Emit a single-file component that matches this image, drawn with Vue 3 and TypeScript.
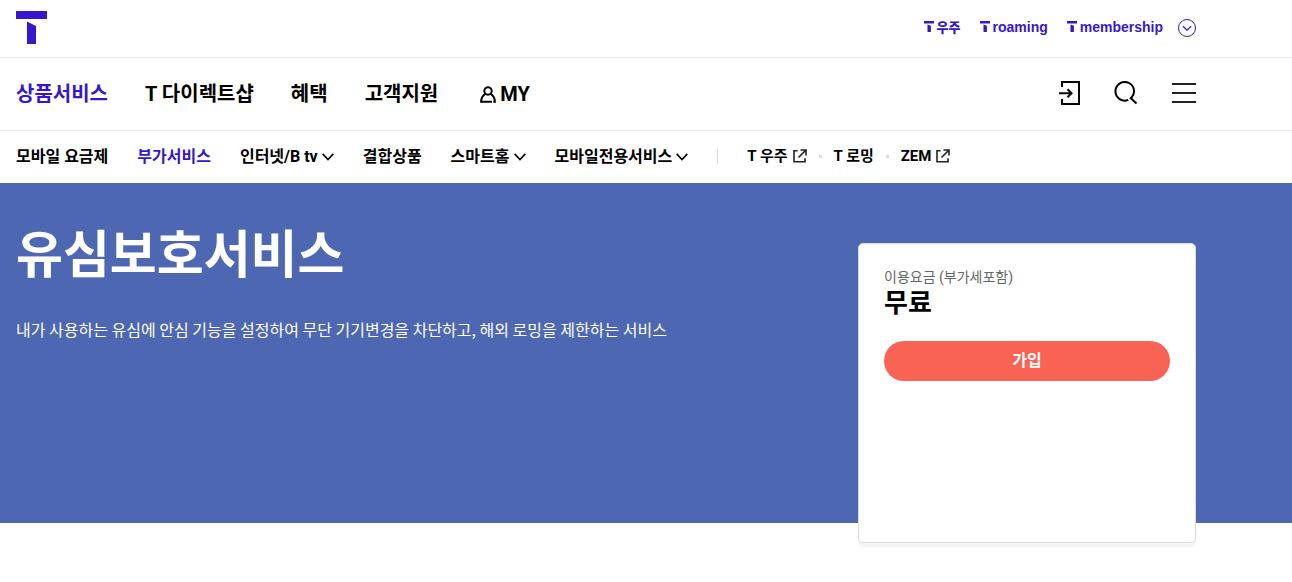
<script setup lang="ts">
interface MenuItem {
  label: string
  active?: boolean
  icon?: 'user' | 'down' | 'external'
}

const brands = [
  { label: '우주', korean: true },
  { label: 'roaming', korean: false },
  { label: 'membership', korean: false },
]

const mainMenu: MenuItem[] = [
  { label: '상품서비스', active: true },
  { label: 'T 다이렉트샵' },
  { label: '혜택' },
  { label: '고객지원' },
  { label: 'MY', icon: 'user' },
]

const subMenu: MenuItem[] = [
  { label: '모바일 요금제' },
  { label: '부가서비스', active: true },
  { label: '인터넷/B tv', icon: 'down' },
  { label: '결합상품' },
  { label: '스마트홈', icon: 'down' },
  { label: '모바일전용서비스', icon: 'down' },
]

const siteLinks: MenuItem[] = [
  { label: 'T 우주', icon: 'external' },
  { label: 'T 로밍' },
  { label: 'ZEM', icon: 'external' },
]
</script>

<template>
  <div class="page">
    <header>
      <div class="bar">
        <div class="inner top">
          <a class="logo" href="#" aria-label="T world">
            <svg width="31" height="33" viewBox="0 0 31 33" fill="currentColor">
              <path d="M0 0h31v8H0zM11 10.5l9 4.5v18h-9z" />
            </svg>
          </a>
          <div class="brands">
            <a v-for="b in brands" :key="b.label" href="#" class="brand" :class="{ korean: b.korean }">
              <svg width="10" height="11" viewBox="0 0 10 11" fill="currentColor">
                <path d="M0 0h10v2.500H0zM3.500 3.400l3.400 1.400V11H3.500z" />
              </svg>
              <span>{{ b.label }}</span>
            </a>
            <button type="button" class="more" aria-label="더보기">
              <svg width="18" height="18" viewBox="0 0 18 18" fill="none" stroke="currentColor">
                <circle cx="9" cy="9" r="8.5" />
                <path d="M5 7.200l4 4 4-4" stroke-width="1.300" />
              </svg>
            </button>
          </div>
        </div>
      </div>

      <div class="bar">
        <div class="inner main">
          <nav class="main-menu" aria-label="주 메뉴">
            <a v-for="m in mainMenu" :key="m.label" href="#" :class="{ active: m.active, user: m.icon }">
              <svg v-if="m.icon" width="16" height="17" viewBox="0 0 16 17" fill="none" stroke="currentColor" stroke-width="2">
                <circle cx="8" cy="5" r="3.700" />
                <path d="M5.500 7.800C2.800 9.200 1.200 11.800 1.100 15.700h10.800M13.300 15.700h1.600c-.1-3.900-1.700-6.500-4.400-7.900" />
              </svg>
              <span>{{ m.label }}</span>
            </a>
          </nav>
          <div class="tools">
            <button type="button" aria-label="로그인">
              <svg width="22" height="24" viewBox="0 0 22 24" fill="none" stroke="currentColor" stroke-width="2">
                <path d="M4 6V1h17v22H4v-5M1 12.300h12M9.500 8.300l4 4-4 4" />
              </svg>
            </button>
            <button type="button" aria-label="검색">
              <svg width="24" height="24" viewBox="0 0 24 24" fill="none" stroke="currentColor" stroke-width="2">
                <path d="M14.300 18.900A9.300 9.300 0 1 1 17.400 16.800M16 16.500l6.500 6" />
              </svg>
            </button>
            <button type="button" aria-label="전체 메뉴">
              <svg width="24" height="20" viewBox="0 0 24 20" fill="none" stroke="currentColor" stroke-width="2">
                <path d="M0 1h24M0 10h24M0 19h24" />
              </svg>
            </button>
          </div>
        </div>
      </div>

      <div class="inner sub">
        <nav class="sub-menu" aria-label="하위 메뉴">
          <a v-for="m in subMenu" :key="m.label" href="#" :class="{ active: m.active }">
            <span>{{ m.label }}</span>
            <svg v-if="m.icon" width="12" height="8" viewBox="0 0 12 8" fill="none" stroke="currentColor" stroke-width="1.600">
              <path d="M.7.900L6 6.500 11.300.900" />
            </svg>
          </a>
        </nav>
        <nav class="site-links" aria-label="관련 사이트">
          <a v-for="m in siteLinks" :key="m.label" href="#">
            <span>{{ m.label }}</span>
            <svg v-if="m.icon" width="14" height="14" viewBox="0 0 14 14" fill="none" stroke="#222" stroke-width="1.600">
              <path d="M4.500 1.800H1v11h11V9.300M7.500 1H13v5.500M13 1L5.500 8.500" />
            </svg>
          </a>
        </nav>
      </div>
    </header>

    <main class="hero">
      <div class="inner hero-inner">
        <div class="intro">
          <h1>유심보호서비스</h1>
          <p>내가 사용하는 유심에 안심 기능을 설정하여 무단 기기변경을 차단하고, 해외 로밍을 제한하는 서비스</p>
        </div>
        <aside class="card">
          <span class="fee-label">이용요금 (부가세포함)</span>
          <strong class="fee">무료</strong>
          <button type="button" class="join">가입</button>
        </aside>
      </div>
    </main>
  </div>
</template>

<style>
body {
  background: #fff;
}
</style>

<style scoped>
.page {
  padding-bottom: 40px;
  font-family: Roboto, "Noto Sans CJK KR", sans-serif;
  color: #000;
}
.page * {
  box-sizing: border-box;
}
a {
  color: inherit;
  text-decoration: none;
  white-space: nowrap;
}
button {
  font: inherit;
  color: inherit;
  border: 0;
  padding: 0;
  background: none;
}
svg {
  display: block;
  flex: none;
}
.bar {
  border-bottom: 1px solid #ececec;
}
.inner {
  max-width: 1212px;
  padding: 0 16px;
  display: flex;
  justify-content: space-between;
}
.top {
  height: 57px;
  padding-bottom: 2px;
  align-items: center;
  color: #3617ce;
}
.brands {
  display: flex;
  align-items: center;
  gap: 19px;
}
.brand {
  display: flex;
  align-items: center;
  gap: 3px;
  padding-bottom: 2px;
  font: bold 14px/20px "Liberation Sans", Arial, sans-serif;
}
.korean {
  font: 900 13px/20px "Noto Sans CJK KR", sans-serif;
}
.more {
  margin-left: -4px;
}
.main {
  height: 72px;
  padding-bottom: 2px;
  align-items: center;
}
.main-menu {
  display: flex;
  gap: 37px;
  padding-top: 2px;
  font-size: 20px;
  line-height: 28px;
  font-weight: 700;
}
.main-menu a {
  display: flex;
  align-items: center;
  gap: 4px;
}
.main-menu .user {
  padding-left: 5px;
}
.active {
  color: #3617ce;
}
.tools {
  display: flex;
  align-items: center;
  gap: 34px;
}
.tools button:last-child {
  color: #222;
}
.sub {
  height: 52px;
  padding-bottom: 2px;
  justify-content: flex-start;
  align-items: center;
}
.sub-menu {
  display: flex;
  gap: 29px;
  padding-top: 2px;
  font-size: 16px;
  line-height: 24px;
  font-weight: 700;
}
.sub-menu a {
  display: flex;
  align-items: center;
  gap: 4px;
}
.site-links a {
  display: flex;
  align-items: center;
  gap: 5px;
}
.site-links {
  display: flex;
  align-items: center;
  font-size: 15px;
  line-height: 24px;
  font-weight: 700;
}
.site-links::before {
  content: "";
  width: 1px;
  height: 15px;
  margin: 0 29px;
  background: #ddd;
}
.site-links a + a::before {
  content: "";
  width: 3px;
  height: 3px;
  margin: 0 7px 0 12px;
  background: #ddd;
}
.hero {
  background: #4d67b3;
}
.hero-inner {
  align-items: flex-start;
}
.intro {
  color: #fff;
  padding-top: 32px;
  font-family: "Noto Sans CJK KR", sans-serif;
}
h1 {
  margin: 0;
  font-size: 51px;
  line-height: 72px;
  font-weight: 700;
}
p {
  margin: 30px 0 0;
  font-size: 16px;
  line-height: 24px;
}
.card {
  flex: none;
  display: flex;
  flex-direction: column;
  width: 338px;
  min-height: 300px;
  margin: 60px 0 -20px;
  padding: 23px 25px;
  background: #fff;
  border: 1px solid #ddd;
  border-radius: 5px;
  box-shadow: 0 4px 0 #f4f4f4;
}
.fee-label {
  font-size: 14px;
  line-height: 20px;
  color: #666;
}
.fee {
  font-size: 26px;
  line-height: 32px;
  font-weight: 700;
}
.join {
  height: 40px;
  margin-top: 22px;
  border-radius: 20px;
  background: #f96354;
  color: #fff;
  font-size: 16px;
  line-height: 24px;
  font-weight: 700;
}
</style>
